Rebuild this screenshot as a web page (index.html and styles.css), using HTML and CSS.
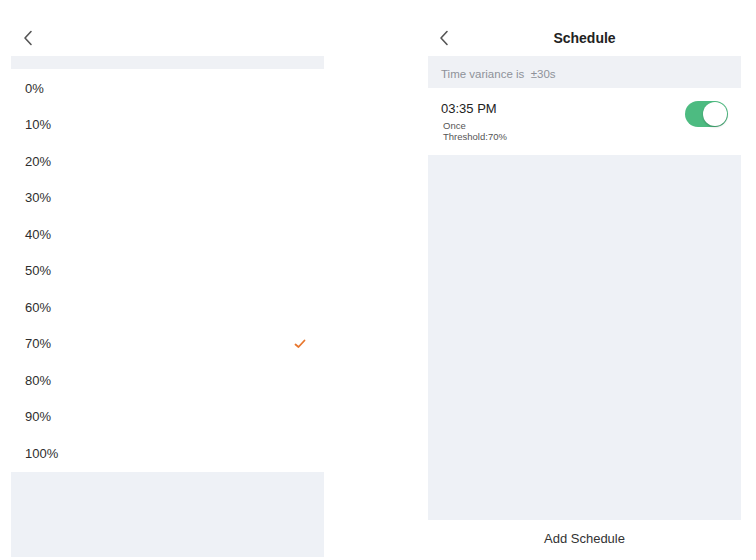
FILE: index.html
```html
<!DOCTYPE html>
<html>
<head>
<meta charset="utf-8">
<link rel="stylesheet" href="styles.css">
</head>
<body>
<div class="screens">
  <section class="panel">
    <header class="nav">
      <svg class="back" width="10" height="16" viewBox="0 0 10 16"><path d="M8 1.5 L2 8 L8 14.5" fill="none" stroke="#555" stroke-width="1.6" stroke-linecap="round" stroke-linejoin="round"/></svg>
    </header>
    <div class="band-thin"></div>
    <ul class="list">
      <li>0%</li>
      <li>10%</li>
      <li>20%</li>
      <li>30%</li>
      <li>40%</li>
      <li>50%</li>
      <li>60%</li>
      <li class="selected">70%<svg class="check" width="12" height="10" viewBox="0 0 12 10"><path d="M1.5 5.5 L4.5 8 L10.5 1.5" fill="none" stroke="#e8772e" stroke-width="1.8" stroke-linecap="round" stroke-linejoin="round"/></svg></li>
      <li>80%</li>
      <li>90%</li>
      <li>100%</li>
    </ul>
    <div class="fill-left"></div>
  </section>
  <section class="panel">
    <header class="nav">
      <svg class="back" width="10" height="16" viewBox="0 0 10 16"><path d="M8 1.5 L2 8 L8 14.5" fill="none" stroke="#555" stroke-width="1.6" stroke-linecap="round" stroke-linejoin="round"/></svg>
      <h1 class="title">Schedule</h1>
    </header>
    <div class="note">Time variance is &nbsp;±30s</div>
    <div class="item">
      <div class="item-text">
        <div class="time">03:35 PM</div>
        <div class="sub">Once</div>
        <div class="sub">Threshold:70%</div>
      </div>
      <div class="toggle"><div class="knob"></div></div>
    </div>
    <div class="fill-right"></div>
    <div class="add">Add Schedule</div>
  </section>
</div>
</body>
</html>
```

FILE: styles.css
```css
* { box-sizing: border-box; }
html, body { margin: 0; padding: 0; background: #fff; }
body {
  font-family: "Liberation Sans", Arial, sans-serif;
  color: #333;
  width: 756px;
  height: 560px;
  overflow: hidden;
}
.screens {
  display: flex;
  gap: 104px;
  padding-left: 11px;
}
.panel {
  width: 313px;
  height: 557px;
  display: flex;
  flex-direction: column;
}
.nav {
  height: 56px;
  position: relative;
  display: flex;
  align-items: center;
  justify-content: center;
  padding-top: 20px;
}
.back {
  position: absolute;
  left: 12px;
  top: 30px;
}
.panel:last-child .back { left: 11px; }
.title {
  margin: 0;
  font-size: 14px;
  font-weight: bold;
  color: #222;
}
.band-thin {
  height: 13px;
  background: #eff1f5;
}
.list {
  list-style: none;
  margin: 0;
  padding: 1px 0 0 0;
}
.list li {
  height: 36.5px;
  display: flex;
  align-items: center;
  justify-content: space-between;
  padding: 0 18px 0 14px;
  font-size: 13px;
  color: #2e2e2e;
}
.check { margin-top: 1px; }
.fill-left {
  height: 85px;
  background: #eef1f6;
}
.note {
  height: 32px;
  background: #eff1f5;
  display: flex;
  align-items: center;
  padding: 4px 0 0 13px;
  font-size: 11.5px;
  color: #8e9199;
}
.item {
  height: 67px;
  display: flex;
  justify-content: space-between;
  align-items: flex-start;
  padding: 13px 13px 0 13px;
}
.time {
  font-size: 13px;
  color: #222;
  margin-bottom: 5px;
}
.sub {
  font-size: 9.5px;
  color: #555;
  line-height: 10.5px;
  padding-left: 2px;
}
.toggle {
  width: 43px;
  height: 26px;
  border-radius: 13px;
  background: #4dbb81;
  position: relative;
  margin-top: 0;
}
.knob {
  position: absolute;
  right: 1px;
  top: 1px;
  width: 24px;
  height: 24px;
  border-radius: 50%;
  background: #fff;
  box-shadow: 0 1px 2px rgba(0,0,0,0.25);
}
.fill-right {
  height: 365px;
  background: #eef1f6;
}
.add {
  height: 37px;
  display: flex;
  align-items: center;
  justify-content: center;
  font-size: 13px;
  color: #333;
}
```
